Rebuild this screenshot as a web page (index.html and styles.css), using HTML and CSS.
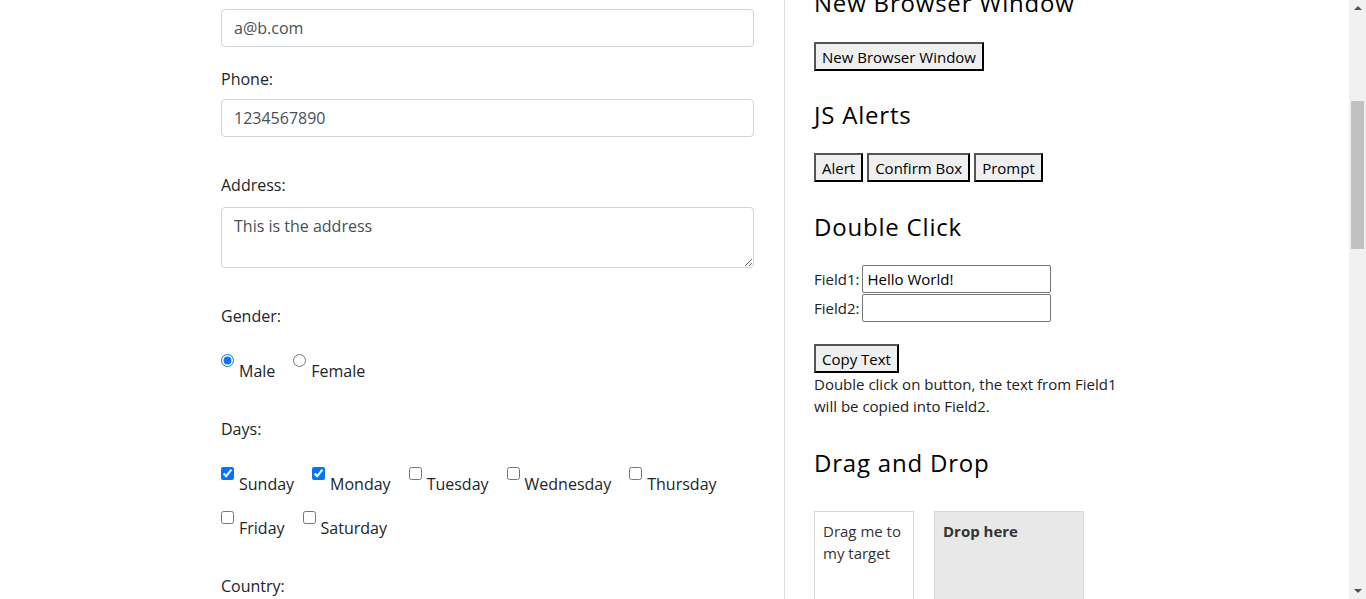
FILE: index.html
```html
<!DOCTYPE html>
<html lang="en">
<head>
<meta charset="utf-8">
<title>Automation Practice</title>
<link rel="stylesheet" href="styles.css">
</head>
<body>
<div class="page">
  <main class="left">
    <div class="group first">
      <input class="fc" type="text" value="a@b.com">
    </div>
    <div class="group second">
      <label class="lbl">Phone:</label>
      <input class="fc" type="text" value="1234567890">
    </div>
    <div class="group wide">
      <label class="lbl">Address:</label>
      <textarea class="fc ta">This is the address</textarea>
    </div>
    <div class="group wide">
      <label class="lbl">Gender:</label>
      <div class="opts">
        <label class="opt"><input type="radio" name="g" checked><span>Male</span></label>
        <label class="opt"><input type="radio" name="g"><span>Female</span></label>
      </div>
    </div>
    <div class="group after-opts">
      <label class="lbl">Days:</label>
      <div class="opts days">
        <label class="opt"><input type="checkbox" checked><span>Sunday</span></label>
        <label class="opt"><input type="checkbox" checked><span>Monday</span></label>
        <label class="opt"><input type="checkbox"><span>Tuesday</span></label>
        <label class="opt"><input type="checkbox"><span>Wednesday</span></label>
        <label class="opt"><input type="checkbox"><span>Thursday</span></label>
        <label class="opt"><input type="checkbox"><span>Friday</span></label>
        <label class="opt"><input type="checkbox"><span>Saturday</span></label>
      </div>
    </div>
    <div class="group after-opts">
      <label class="lbl">Country:</label>
    </div>
  </main>
  <div class="divider"></div>
  <aside class="right">
    <h2 class="h top">New Browser Window</h2>
    <div class="btnrow first-row"><button class="btn">New Browser Window</button></div>
    <h2 class="h alerts">JS Alerts</h2>
    <div class="btnrow"><button class="btn">Alert</button><button class="btn">Confirm Box</button><button class="btn">Prompt</button></div>
    <h2 class="h dbl">Double Click</h2>
    <div class="fields">
      <div class="frow"><span>Field1:</span><input class="fin" type="text" value="Hello World!"></div>
      <div class="frow"><span>Field2:</span><input class="fin" type="text" value=""></div>
    </div>
    <div class="btnrow copy"><button class="btn">Copy Text</button></div>
    <p class="note">Double click on button, the text from Field1 will be copied into Field2.</p>
    <h2 class="h dnd-title">Drag and Drop</h2>
    <div class="dnd">
      <div class="drag">Drag me to my target</div>
      <div class="drop"><strong>Drop here</strong></div>
    </div>
  </aside>
</div>
<div class="scrollbar">
  <div class="arrow up"></div>
  <div class="thumb"></div>
  <div class="arrow down"></div>
</div>
</body>
</html>
```

FILE: styles.css
```css
html, body {
  margin: 0;
  padding: 0;
  height: 100%;
  overflow: hidden;
  background: #fff;
}
body {
  font-family: "Open Sans", "Noto Sans", sans-serif;
  color: #212529;
}
.page {
  display: flex;
  align-items: stretch;
  width: 1349px;
  min-height: 100vh;
}
.left {
  margin-left: 221px;
  width: 533px;
  padding-top: 9px;
  font-size: 16px;
  line-height: 24px;
}
.group { margin-top: 18px; }
.group.first { margin-top: 0; }
.group.second { margin-top: 20px; }
.group.second .lbl { margin-bottom: 8px; }
.group.wide { margin-top: 36px; }
.group.after-opts { margin-top: 34px; }
.lbl {
  display: block;
  margin-bottom: 10px;
  color: #212529;
}
.fc {
  display: block;
  box-sizing: border-box;
  width: 100%;
  height: 38px;
  padding: 6px 12px;
  border: 1px solid #ced4da;
  border-radius: 4px;
  font-family: inherit;
  font-size: 16px;
  line-height: 24px;
  color: #495057;
  background: #fff;
  margin: 0;
}
.ta {
  height: 61px;
  resize: vertical;
}
.group .opts { margin-top: 26px; }
.opts {
  display: flex;
  flex-wrap: wrap;
  column-gap: 18px;
  row-gap: 15px;
}
.opt {
  display: flex;
  align-items: flex-start;
}
.opt input {
  margin: 0;
  width: 13px;
  height: 13px;
}
.opt span {
  margin-left: 5px;
  padding-top: 5px;
}
.divider {
  width: 1px;
  background: #dedede;
  margin-left: 30px;
}
.right {
  margin-left: 29px;
  width: 320px;
  margin-top: -11px;
  font-size: 15px;
  line-height: 22px;
  color: #222;
}
.h {
  margin: 0;
  font-size: 24px;
  line-height: 28px;
  font-weight: 400;
  letter-spacing: 0.8px;
  color: #000;
  margin-top: 31px;
}
.h.top { margin-top: 0; }
.h.alerts { margin-top: 30px; }
.h.dbl { margin-top: 31px; }
.h.dnd-title { margin-top: 32px; }
.btnrow {
  display: flex;
  gap: 4px;
  margin-top: 24px;
}
.btnrow.first-row { margin-top: 25px; }
.btnrow.copy { margin-top: 22px; }
.btn {
  box-sizing: border-box;
  height: 29px;
  padding: 0 6px;
  border: 2px solid;
  border-color: #555 #000 #000 #555;
  background: #efefef;
  font-family: inherit;
  font-size: 15px;
  color: #000;
  margin: 0;
}
.fields {
  margin-top: 24px;
  display: flex;
  flex-direction: column;
  gap: 1px;
}
.frow {
  display: flex;
  align-items: center;
  gap: 3px;
  color: #222;
}
.fin {
  box-sizing: border-box;
  width: 189px;
  height: 28px;
  border: 1px solid #767676;
  border-radius: 2px;
  padding: 0 4px;
  font-family: inherit;
  font-size: 15px;
  color: #000;
  margin: 0;
}
.note {
  margin: 0;
}
.dnd {
  margin-top: 34px;
  display: flex;
  gap: 20px;
}
.drag, .drop {
  box-sizing: border-box;
  height: 150px;
  padding: 8px;
  border: 1px solid #d8d8d8;
  color: #333;
}
.drag {
  width: 100px;
  background: #fff;
}
.drop {
  width: 150px;
  background: #e8e8e8;
}
.scrollbar {
  position: fixed;
  top: 0;
  right: 0;
  width: 17px;
  height: 100%;
  background: #f1f1f1;
}
.thumb {
  position: absolute;
  left: 2px;
  top: 101px;
  width: 13px;
  height: 148px;
  background: #c1c1c1;
}
.arrow {
  position: absolute;
  left: 5px;
  width: 0;
  height: 0;
  border-left: 4px solid transparent;
  border-right: 4px solid transparent;
}
.arrow.up {
  top: 6px;
  border-bottom: 4px solid #505050;
}
.arrow.down {
  bottom: 6px;
  border-top: 4px solid #505050;
}
```
